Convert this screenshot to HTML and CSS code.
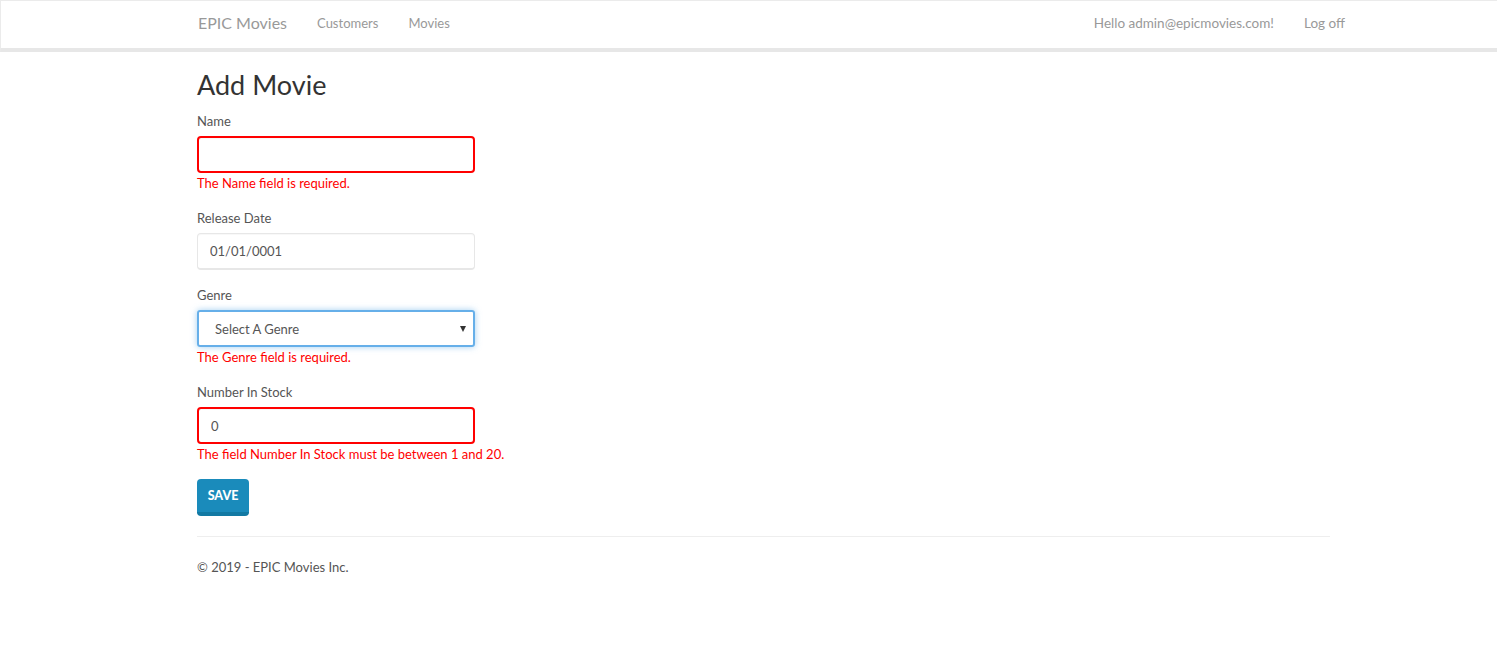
FILE: index.html
```html
<!DOCTYPE html>
<html lang="en">
<head>
<meta charset="utf-8">
<title>Add Movie - EPIC Movies</title>
<link rel="stylesheet" href="styles.css">
</head>
<body>
<nav class="navbar">
  <div class="container nav-inner">
    <div class="nav-left">
      <a class="brand" href="#">EPIC Movies</a>
      <a class="nav-link" href="#">Customers</a>
      <a class="nav-link" href="#">Movies</a>
    </div>
    <div class="nav-right">
      <a class="nav-link user-link" href="#">Hello admin@epicmovies.com!</a>
      <a class="nav-link user-link" href="#">Log off</a>
    </div>
  </div>
</nav>
<main class="container body-content">
  <h2 class="title">Add Movie</h2>
  <form class="movie-form">
    <div class="form-group">
      <label class="control-label">Name</label>
      <input class="form-control invalid" type="text" value="">
      <span class="field-error">The Name field is required.</span>
    </div>
    <div class="form-group">
      <label class="control-label">Release Date</label>
      <input class="form-control" type="text" value="01/01/0001">
    </div>
    <div class="form-group">
      <label class="control-label">Genre</label>
      <div class="select-box">
        <span class="select-text">Select A Genre</span>
        <span class="caret"></span>
      </div>
      <span class="field-error">The Genre field is required.</span>
    </div>
    <div class="form-group">
      <label class="control-label">Number In Stock</label>
      <input class="form-control invalid" type="text" value="0">
      <span class="field-error">The field Number In Stock must be between 1 and 20.</span>
    </div>
    <button class="btn-primary" type="button">Save</button>
  </form>
  <hr class="divider">
  <footer class="footer">
    <p>&copy; 2019 - EPIC Movies Inc.</p>
  </footer>
</main>
</body>
</html>
```
FILE: styles.css
```css
html, body {
  margin: 0;
  padding: 0;
  background: #fff;
}
body {
  font-family: "Lato", "Open Sans", sans-serif;
  font-size: 13px;
  line-height: 20px;
  color: #555;
}
.container {
  box-sizing: border-box;
  width: 1163px;
  margin-left: 182px;
  padding: 0 15px;
}
.navbar {
  border-top: 1px solid #ebebeb;
  border-left: 1px solid #ebebeb;
  border-bottom: 4px solid #e7e7e7;
  height: 47px;
  background: #fff;
}
.nav-inner {
  display: flex;
  justify-content: space-between;
  align-items: center;
  height: 44px;
}
.nav-left, .nav-right {
  display: flex;
  align-items: center;
}
.nav-left { margin-left: -15px; }
.nav-right { margin-right: -29px; }
.brand {
  font-size: 16px;
  color: #999;
  text-decoration: none;
  padding: 0 15px;
}
.nav-link {
  font-size: 13px;
  color: #999;
  text-decoration: none;
  padding: 0 15px;
}
.user-link {
  font-size: 13.5px;
}
.title {
  font-size: 27px;
  font-weight: 400;
  line-height: 33px;
  color: #333;
  margin: 16px 0 10px;
}
.form-group {
  margin-bottom: 15px;
}
.control-label {
  display: block;
  margin-bottom: 5px;
}
.form-control {
  display: block;
  box-sizing: border-box;
  width: 278px;
  height: 37px;
  padding: 6px 12px;
  font-family: inherit;
  font-size: 13px;
  color: #555;
  background: #fff;
  border: 1px solid #e7e7e7;
  border-bottom-width: 2px;
  border-radius: 4px;
  box-shadow: inset 0 1px 1px rgba(0,0,0,0.03);
  outline: none;
}
.form-control.invalid {
  border: 2px solid #ff0000;
}
.select-box {
  box-sizing: border-box;
  width: 278px;
  height: 37px;
  display: flex;
  align-items: center;
  justify-content: space-between;
  padding: 0 7px 0 16px;
  border: 2px solid #66afe9;
  border-radius: 3px;
  box-shadow: 0 0 6px rgba(102,175,233,0.6);
  color: #555;
}
.caret {
  width: 0;
  height: 0;
  border-left: 3px solid transparent;
  border-right: 3px solid transparent;
  border-top: 6px solid #333;
}
.field-error {
  display: block;
  color: #ff0000;
}
.btn-primary {
  display: block;
  box-sizing: border-box;
  width: 52px;
  height: 37px;
  padding: 0;
  font-family: inherit;
  font-size: 12.5px;
  font-weight: 900;
  text-transform: uppercase;
  color: #fff;
  background: #1a8bbb;
  border: none;
  border-bottom: 4px solid #1279a3;
  border-radius: 4px;
  margin-top: 1px;
}
.divider {
  border: 0;
  border-top: 1px solid #eee;
  margin: 20px 0 0;
}
.footer p {
  margin: 20px 0 0;
}
```
